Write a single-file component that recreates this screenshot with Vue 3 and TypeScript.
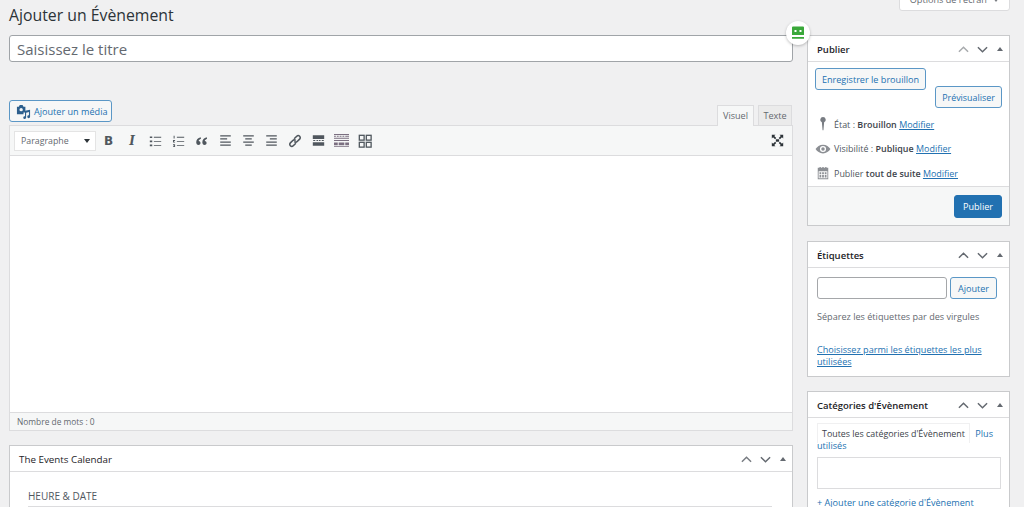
<script setup lang="ts">
interface Tool { id: string; paths: string[]; fill?: string; size?: number }
const tools: Tool[] = [
  { id: 'ul', paths: ['M1 3h3v2H1zM1 8h3v2H1zM1 13h3v2H1z', 'M6 3.500h9v1H6zM6 8.500h9v1H6zM6 13.500h9v1H6z'] },
  { id: 'ol', paths: ['M2 2h1.200v3.500H2zM1.200 7.500h2.600v1H2.400v1h1.400v1H1.200zM1.200 12.500h2.600v3.500H1.200v-1h1.500v-.4H1.600v-.8h1.100v-.3H1.200z', 'M6 3.500h9v1H6zM6 8.500h9v1H6zM6 13.500h9v1H6z'] },
  { id: 'quote', paths: ['M7 4C3.500 5 1.500 7 1.500 10.200c0 2 1.100 3.300 2.700 3.300 1.500 0 2.600-1.100 2.600-2.500S5.700 8.600 4.500 8.600c.3-1.200 1.200-2 2.900-2.700zM14.500 4c-3.500 1-5.500 3-5.500 6.200 0 2 1.100 3.300 2.700 3.300 1.500 0 2.600-1.100 2.600-2.500s-1.100-2.400-2.300-2.400c.3-1.200 1.200-2 2.900-2.700z'] },
  { id: 'left', paths: ['M1.500 1.500h13V3h-13zM1.500 5.300h8.500v1.500H1.500zM1.500 9.200h13v1.500h-13zM1.500 13h13v1.500h-13z'] },
  { id: 'center', paths: ['M1.500 1.500h13V3h-13zM4 5.300h8v1.500H4zM1.500 9.200h13v1.500h-13zM4 13h8v1.500H4z'] },
  { id: 'right', paths: ['M1.500 1.500h13V3h-13zM6 5.300h8.500v1.500H6zM1.500 9.200h13v1.500h-13zM1.500 13h13v1.500h-13z'] },
];
const toolsAfter: Tool[] = [
  { id: 'hr', paths: ['M1 1.500h14v4.500H1zM1 10h14v4.500H1zM1.500 7.500h2.500v1H1.500zM5.500 7.500h2v1h-2zM8.500 7.500h2v1h-2zM12 7.500h2.500v1H12z'], size: 13 },
  { id: 'more', paths: ['M0 1h16v1H0zM0 3h2v1H0zM3 3h2v1H3zM6 3h2v1H6zM9 3h2v1H9zM12 3h4v1h-4zM0 5h16v1H0zM0 7.500h16v1H0zM0 10h4v3H0zM5 10h6v3H5zM12 10h4v3h-4zM0 14h16v1H0z'], fill: '#7b6f80', size: 15 }
];
</script>

<template>
  <div class="page">
    <main class="main">
      <h1 class="heading">Ajouter un Évènement</h1>

      <div class="title-wrap">
        <input class="title-input" type="text" placeholder="Saisissez le titre" />
        <span class="robot">
          <svg width="14" height="14" viewBox="0 0 14 14">
            <path fill="#3aa83a" fill-rule="evenodd" d="M2 .5h10a1 1 0 0 1 1 1v7.500H1V1.500a1 1 0 0 1 1-1zM3.500 4v2h2V4zm5 0v2h2V4zM1 11h12v1.700H1z" />
          </svg>
        </span>
      </div>

      <div class="editor-top">
        <button class="btn media-btn" type="button">
          <svg class="media-ico" width="15" height="15" viewBox="0 0 16 16">
            <path fill="#2d5f8d" fill-rule="evenodd" d="M1 3h2l1-2h3l1 2h2v6H8v2H1zM5.500 4.200a1.800 1.800 0 1 0 0 3.600 1.800 1.800 0 0 0 0-3.600z" />
            <path fill="#2d5f8d" d="M15 6v7.500a1.500 1.500 0 1 1-1.200-1.400V8.500l-3 .7v5.300A1.500 1.500 0 1 1 9.600 13V7.300z" />
          </svg>
          Ajouter un média
        </button>
        <div class="tabs">
          <span class="tab active">Visuel</span>
          <span class="tab">Texte</span>
        </div>
      </div>

      <section class="editor">
        <div class="toolbar">
          <div class="select">
            <span>Paragraphe</span>
            <i class="caret"></i>
          </div>
          <span class="tool tool-text bold">B</span>
          <span class="tool tool-text italic">I</span>
          <span v-for="t in tools" :key="t.id" class="tool">
            <svg width="13" height="13" viewBox="0 0 16 16">
              <path v-for="(d, i) in t.paths" :key="i" :d="d" :fill="t.fill || '#50575e'" />
            </svg>
          </span>
          <span class="tool">
            <svg width="14" height="14" viewBox="0 0 16 16" fill="none" stroke="#50575e" stroke-width="1.800">
              <path d="M7 5.500 10 2.500a2.300 2.300 0 0 1 3.300 3.300L10.500 8.600a2.300 2.300 0 0 1-3.300 0" />
              <path d="M9 10.500 6 13.500a2.300 2.300 0 0 1-3.300-3.300L5.500 7.400a2.300 2.300 0 0 1 3.300 0" />
            </svg>
          </span>
          <span v-for="t in toolsAfter" :key="t.id" class="tool">
            <svg :width="t.size" :height="t.size" viewBox="0 0 16 16">
              <path v-for="(d, i) in t.paths" :key="i" :d="d" :fill="t.fill || '#50575e'" />
            </svg>
          </span>
          <span class="tool">
            <svg width="14" height="14" viewBox="0 0 16 16" fill="none" stroke="#50575e" stroke-width="1.500">
              <rect x="1.500" y="1.500" width="5.500" height="5.500" />
              <rect x="9.500" y="1.500" width="5.500" height="5.500" />
              <rect x="1.500" y="9.500" width="5.500" height="5.500" />
              <rect x="9.500" y="9.500" width="5.500" height="5.500" />
            </svg>
          </span>
          <span class="tool fullscreen">
            <svg width="13" height="13" viewBox="0 0 16 16">
              <path fill="#2c3338" d="M1 1h4.500L4 2.500 6.500 5 5 6.500 2.500 4 1 5.500zM15 1v4.500L13.500 4 11 6.500 9.500 5 12 2.500 10.500 1zM1 15v-4.500L2.500 12 5 9.500 6.500 11 4 13.500 5.500 15zM15 15h-4.500l1.500-1.500L9.500 11 11 9.500l2.500 2.500 1.500-1.500z" />
              <rect x="6" y="6.500" width="4" height="3" fill="#2c3338" />
            </svg>
          </span>
        </div>
        <div class="editor-body"></div>
        <div class="status">Nombre de mots : 0</div>
      </section>

      <section class="box events">
        <header class="box-head">
          <h2 class="plain">The Events Calendar</h2>
          <div class="controls">
            <svg width="11" height="7" viewBox="0 0 12 7"><path d="M1 6 6 1l5 5" fill="none" stroke="#787c82" stroke-width="1.600" /></svg>
            <svg width="11" height="7" viewBox="0 0 12 7"><path d="M1 1l5 5 5-5" fill="none" stroke="#646970" stroke-width="1.600" /></svg>
            <i class="tri"></i>
          </div>
        </header>
        <div class="events-body">
          <h3>HEURE &amp; DATE</h3>
        </div>
      </section>
    </main>

    <aside class="side">
      <button class="screen-options" type="button">Options de l'écran <i class="caret small"></i></button>

      <section class="box publish">
        <header class="box-head">
          <h2>Publier</h2>
          <div class="controls">
            <svg width="11" height="7" viewBox="0 0 12 7"><path d="M1 6 6 1l5 5" fill="none" stroke="#a7aaad" stroke-width="1.600" /></svg>
            <svg width="11" height="7" viewBox="0 0 12 7"><path d="M1 1l5 5 5-5" fill="none" stroke="#646970" stroke-width="1.600" /></svg>
            <i class="tri"></i>
          </div>
        </header>
        <div class="pub-actions">
          <button class="btn draft" type="button">Enregistrer le brouillon</button>
          <button class="btn preview" type="button">Prévisualiser</button>
        </div>
        <div class="pub-rows">
          <div class="pub-row">
            <svg class="pub-ico" width="16" height="14" viewBox="0 0 18 16"><path fill="#787c82" d="M9 0a3.200 3.200 0 0 1 1.300 6.100L9.500 15h-1l-.8-8.900A3.200 3.200 0 0 1 9 0z" /></svg>
            <span>État : <b>Brouillon</b> <a>Modifier</a></span>
          </div>
          <div class="pub-row">
            <svg class="pub-ico" width="16" height="14" viewBox="0 0 18 16"><path fill="#8c8f94" fill-rule="evenodd" d="M9 3c3.800 0 6.800 2.400 8.500 5-1.700 2.600-4.700 5-8.500 5S2.200 10.600.5 8C2.200 5.400 5.200 3 9 3zm0 1.500a3.500 3.500 0 1 0 0 7 3.500 3.500 0 0 0 0-7zM9 6a2 2 0 1 1 0 4 2 2 0 0 1 0-4z" /></svg>
            <span>Visibilité : <b>Publique</b> <a>Modifier</a></span>
          </div>
          <div class="pub-row">
            <svg class="pub-ico" width="16" height="14" viewBox="0 0 18 16"><path fill="#8c8f94" fill-rule="evenodd" d="M3 2h2V1h1.500v1h1.700V1h1.600v1h1.700V1H13v1h2v13H3zm1 4v8h10V6zm1 1h2v2H5zm3 0h2v2H8zm3 0h2v2h-2zm-6 3h2v3H5zm3 0h2v3H8zm3 0h2v3h-2z" /></svg>
            <span>Publier <b class="semi">tout de suite</b> <a>Modifier</a></span>
          </div>
        </div>
        <footer class="pub-foot">
          <button class="btn primary" type="button">Publier</button>
        </footer>
      </section>

      <section class="box tags">
        <header class="box-head">
          <h2>Étiquettes</h2>
          <div class="controls">
            <svg width="11" height="7" viewBox="0 0 12 7"><path d="M1 6 6 1l5 5" fill="none" stroke="#646970" stroke-width="1.600" /></svg>
            <svg width="11" height="7" viewBox="0 0 12 7"><path d="M1 1l5 5 5-5" fill="none" stroke="#646970" stroke-width="1.600" /></svg>
            <i class="tri"></i>
          </div>
        </header>
        <div class="tags-body">
          <div class="tag-add">
            <input class="tag-input" type="text" />
            <button class="btn tag-btn" type="button">Ajouter</button>
          </div>
          <p class="hint">Séparez les étiquettes par des virgules</p>
          <a class="tag-link">Choisissez parmi les étiquettes les plus utilisées</a>
        </div>
      </section>

      <section class="box cats">
        <header class="box-head">
          <h2>Catégories d'Évènement</h2>
          <div class="controls">
            <svg width="11" height="7" viewBox="0 0 12 7"><path d="M1 6 6 1l5 5" fill="none" stroke="#646970" stroke-width="1.600" /></svg>
            <svg width="11" height="7" viewBox="0 0 12 7"><path d="M1 1l5 5 5-5" fill="none" stroke="#646970" stroke-width="1.600" /></svg>
            <i class="tri"></i>
          </div>
        </header>
        <div class="cats-body">
          <div class="cat-tabs"><span class="cat-tab">Toutes les catégories d'Évènement</span> <span class="cat-more">Plus utilisés</span></div>
          <div class="cat-list"></div>
          <p class="cat-add">+ Ajouter une catégorie d'Évènement</p>
        </div>
      </section>
    </aside>
  </div>
</template>

<style>
html, body { margin: 0; background: #f0f0f1; }
</style>

<style scoped>
* { box-sizing: border-box; }
.page {
  width: 1024px;
  height: 507px;
  overflow: hidden;
  display: grid;
  grid-template-columns: 784px 203px;
  column-gap: 14px;
  padding-left: 9px;
  background: #f0f0f1;
  font-family: "Open Sans", "Noto Sans", sans-serif;
  font-size: 9.100px;
  color: #50575e;
}
.main, .side { display: flex; flex-direction: column; min-width: 0; }
.heading {
  margin: 0;
  height: 35px;
  padding-top: 3px;
  font-size: 15.800px;
  line-height: 24px;
  font-weight: 400;
  color: #2c3338;
}
.title-wrap { position: relative; height: 27px; }
.title-input {
  width: 100%;
  height: 27px;
  border: 1px solid #a0a4a8;
  border-radius: 3px;
  background: #fff;
  padding: 0 7px;
  font: 400 15px "Open Sans", sans-serif;
  outline: none;
}
.title-input::placeholder { color: #646970; opacity: 1; }
.robot {
  position: absolute;
  right: -17px;
  top: -14px;
  width: 24px;
  height: 24px;
  border-radius: 50%;
  background: #fff;
  box-shadow: 0 1px 3px rgba(0,0,0,.25);
  display: flex;
  align-items: center;
  justify-content: center;
}
.editor-top {
  display: flex;
  justify-content: space-between;
  align-items: flex-end;
  margin-top: 37px;
  height: 26px;
  position: relative;
  z-index: 1;
}
.btn {
  font-family: inherit;
  font-size: 9.100px;
  color: #2271b1;
  background: #f6f7f7;
  border: 1px solid #5b97c6;
  border-radius: 3px;
  padding: 0;
  cursor: pointer;
}
.media-btn {
  width: 103px;
  height: 22px;
  margin-bottom: 3px;
  display: flex;
  align-items: center;
  gap: 3px;
  padding-left: 6px;
  white-space: nowrap;
}
.media-ico { flex: none; }
.tabs { display: flex; gap: 4px; margin-right: 1px; }
.tab {
  height: 20px;
  width: 34px;
  border: 1px solid #dcdcde;
  border-bottom: 0;
  background: #ebebeb;
  color: #646970;
  text-align: center;
  line-height: 20px;
}
.tab.active {
  width: 37px;
  height: 21px;
  background: #f6f7f7;
  margin-bottom: -1px;
}
.editor {
  height: 306px;
  border: 1px solid #dcdcde;
  display: flex;
  flex-direction: column;
  background: #fff;
}
.toolbar {
  height: 30px;
  background: #f6f7f7;
  border-bottom: 1px solid #dcdcde;
  display: flex;
  align-items: center;
  padding-left: 4px;
  flex: none;
}
.select {
  width: 82px;
  height: 20px;
  background: #fff;
  border: 1px solid #e4e4e4;
  padding: 0 6px;
  margin-right: 1px;
  display: flex;
  align-items: center;
  justify-content: space-between;
  color: #646970;
  font-size: 8.800px;
}
.caret {
  width: 0;
  height: 0;
  border-left: 3.500px solid transparent;
  border-right: 3.500px solid transparent;
  border-top: 4px solid #2c3338;
  margin-right: -1px;
}
.caret.small { display: inline-block; margin: 0 0 1px 4px; border-top-color: #787c82; }
.tool {
  width: 23.300px;
  height: 20px;
  display: flex;
  align-items: center;
  justify-content: center;
  flex: none;
}
.tool-text {
  font-family: "DejaVu Sans", sans-serif;
  font-size: 12px;
  color: #50575e;
}
.bold { font-weight: 700; }
.italic { font-style: italic; font-weight: 700; font-family: "DejaVu Serif", serif; }
.fullscreen { margin-left: auto; margin-right: 3px; }
.editor-body { flex: 1; background: #fff; }
.status {
  height: 18px;
  flex: none;
  border-top: 1px solid #dcdcde;
  background: #f6f7f7;
  padding-left: 7px;
  line-height: 17px;
  font-size: 8.400px;
  color: #646970;
}
.box {
  background: #fff;
  border: 1px solid #c9cacc;
  flex: none;
}
.box-head {
  height: 26px;
  display: flex;
  align-items: center;
  justify-content: space-between;
  border-bottom: 1px solid #dcdcde;
  padding: 1px 6px 0 9px;
}
.box-head h2 {
  margin: 0;
  font-size: 9.500px;
  font-weight: 600;
  color: #1d2327;
}
.box-head h2.plain { font-weight: 500; font-size: 9.800px; }
.controls { display: flex; align-items: center; gap: 8px; }
.tri {
  width: 0;
  height: 0;
  margin-left: 1px;
  margin-right: 0;
  border-left: 3.500px solid transparent;
  border-right: 3.500px solid transparent;
  border-bottom: 4.500px solid #646970;
}
.events { margin-top: 14px; height: 80px; }
.events-body { padding: 17px 20px 0 18px; }
.events-body h3 {
  margin: 0;
  border-bottom: 1px solid #dcdcde;
  font-size: 10px;
  line-height: 14px;
  font-weight: 500;
  color: #50575e;
  height: 18px;
}
.screen-options {
  align-self: flex-end;
  width: 111px;
  height: 23px;
  margin-top: -12px;
  margin-bottom: 24px;
  background: #fff;
  border: 1px solid #dcdcde;
  border-radius: 0 0 3px 3px;
  font: 400 9.100px "Open Sans", sans-serif;
  color: #646970;
  padding: 0;
}
.publish { height: 191px; display: flex; flex-direction: column; }
.pub-actions {
  height: 47px;
  padding: 6px 7px 0 7px;
  flex: none;
}
.draft {
  display: block;
  width: 111px;
  height: 22px;
  white-space: nowrap;
}
.preview {
  display: block;
  width: 67px;
  height: 22px;
  margin-left: auto;
  margin-top: -4px;
  font-size: 8.900px;
}
.pub-rows { padding: 3px 0 0 7px; flex: 1; font-size: 8.950px; }
.pub-row {
  height: 24.500px;
  display: flex;
  align-items: center;
  gap: 2px;
  white-space: nowrap;
  color: #50575e;
}
.pub-ico { flex: none; margin-right: 1px; }
.pub-row b { font-weight: 600; color: #3c434a; }
a { color: #2271b1; text-decoration: underline; }
.pub-foot {
  height: 39px;
  background: #f6f7f7;
  border-top: 1px solid #dcdcde;
  display: flex;
  justify-content: flex-end;
  align-items: center;
  padding-right: 7px;
  flex: none;
}
.primary {
  width: 48px;
  height: 23px;
  background: #2271b1;
  border-color: #2271b1;
  color: #fff;
}
.tags { margin-top: 15px; height: 136px; }
.tags-body { padding: 9px 9px 0 9px; }
.tag-add { display: flex; gap: 3px; }
.tag-input {
  width: 130px;
  height: 22px;
  border: 1px solid #a5a7aa;
  border-radius: 3px;
  background: #fff;
  outline: none;
}
.tag-btn { width: 47px; height: 22px; }
.hint { margin: 11px 0 0; line-height: 13px; color: #646970; height: 13px; }
.tag-link { display: block; margin-top: 21px; line-height: 12px; }
.cats { margin-top: 14px; height: 140px; }
.cats-body { padding: 5px 8px 0 9px; }
.cat-tabs { line-height: 12px; height: 34px; color: #2271b1; }
.cat-tab {
  display: inline-block;
  height: 20px;
  line-height: 20px;
  padding: 0 4px;
  border: 1px solid #f0f0f1;
  border-bottom: 0;
  color: #3c434a;
  margin-right: 3px;
  margin-bottom: -3px;
  white-space: nowrap;
  font-size: 8.900px;
}
.cat-more { line-height: 12px; }
.cat-list {
  height: 32px;
  border: 1px solid #dcdcde;
  background: #fff;
}
.cat-add {
  margin: 7px 0 0;
  line-height: 14px;
  color: #2271b1;
  white-space: nowrap;
  font-weight: 500;
}
</style>
